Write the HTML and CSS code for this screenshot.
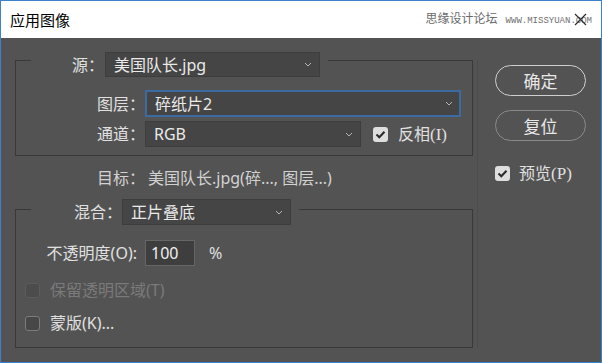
FILE: index.html
```html
<!DOCTYPE html>
<html lang="zh-CN">
<head>
  <meta charset="UTF-8">
  <title>应用图像</title>
  <link rel="stylesheet" href="styles.css">
</head>
<body>
  <div class="window">
    <div class="titlebar">
      <span class="title">应用图像</span>
      <span class="watermark">思缘设计论坛<span class="wm-url">WWW.MISSYUAN.COM</span></span>
      <svg class="close" width="13" height="13" viewBox="0 0 13 13"><path d="M1 1L12 12M12 1L1 12" stroke="#2b2b2b" stroke-width="1.2" fill="none"/></svg>
    </div>

    <div class="content">
      <div class="main">
        <div class="group group-source">
          <div class="group-head">
            <span class="head-label">源：</span>
            <div class="select select-source">美国队长.jpg<svg class="chev" width="8" height="5" viewBox="0 0 8 5"><path d="M1 1l3 3 3-3" fill="none" stroke="#b5b5b5"/></svg></div>
          </div>
          <div class="row row-layer">
            <span class="lbl">图层：</span>
            <div class="select select-layer">碎纸片2<svg class="chev" width="8" height="5" viewBox="0 0 8 5"><path d="M1 1l3 3 3-3" fill="none" stroke="#b5b5b5"/></svg></div>
          </div>
          <div class="row row-channel">
            <span class="lbl">通道：</span>
            <div class="select select-channel">RGB<svg class="chev" width="8" height="5" viewBox="0 0 8 5"><path d="M1 1l3 3 3-3" fill="none" stroke="#b5b5b5"/></svg></div>
            <span class="check on"><svg width="11" height="9" viewBox="0 0 11 9"><path d="M1.5 4.5l2.8 2.8 5.2-5.6" fill="none" stroke="#2a2a2a" stroke-width="2"/></svg></span>
            <span class="check-text">反相<span class="serif">(I)</span></span>
          </div>
        </div>

        <div class="target">
          <span class="lbl-target">目标：</span>
          <span class="target-value">美国队长.jpg(碎..., 图层...)</span>
        </div>

        <div class="group group-blend">
          <div class="group-head">
            <span class="head-label">混合：</span>
            <div class="select select-blend">正片叠底<svg class="chev" width="8" height="5" viewBox="0 0 8 5"><path d="M1 1l3 3 3-3" fill="none" stroke="#b5b5b5"/></svg></div>
          </div>
          <div class="row row-opacity">
            <span class="lbl-opacity">不透明度(O):</span>
            <div class="num-input">100</div>
            <span class="pct">%</span>
          </div>
          <div class="row row-check row-preserve">
            <span class="check disabled"></span>
            <span class="check-text muted">保留透明区域(T)</span>
          </div>
          <div class="row row-check row-mask">
            <span class="check off"></span>
            <span class="check-text">蒙版(K)...</span>
          </div>
        </div>
      </div>

      <div class="side">
        <button class="btn btn-ok">确定</button>
        <button class="btn btn-reset">复位</button>
        <div class="row row-preview">
          <span class="check on"><svg width="11" height="9" viewBox="0 0 11 9"><path d="M1.5 4.5l2.8 2.8 5.2-5.6" fill="none" stroke="#2a2a2a" stroke-width="2"/></svg></span>
          <span class="check-text">预览<span class="serif">(P)</span></span>
        </div>
      </div>
    </div>
  </div>
</body>
</html>
```

FILE: styles.css
```css
body {
  margin: 0;
  font-family: "Noto Sans", "Noto Sans CJK SC", sans-serif;
  font-size: 16px;
  color: #e0e0e0;
}
.window {
  width: 602px;
  height: 363px;
  box-sizing: border-box;
  border: 1px solid #3a82cc;
  background: #535353;
  display: flex;
  flex-direction: column;
}
.titlebar {
  position: relative;
  flex-shrink: 0;
  height: 37px;
  background: #fff;
  display: flex;
  align-items: center;
  padding: 0 9px 0 9px;
  line-height: 20px;
}
.title {
  color: #000;
  font-size: 15px;
}
.watermark {
  margin-left: auto;
  color: #6a6a6a;
  font-size: 12px;
}
.wm-url {
  font-family: "Liberation Mono", monospace;
  font-size: 9px;
  margin-left: 8px;
  color: #707070;
}
.close {
  position: absolute;
  right: 14px;
  top: 12px;
}

.content {
  flex: 1;
  display: flex;
}
.main {
  width: 476px;
  box-sizing: border-box;
  padding: 22px 0 0 14px;
  line-height: 20px;
}

/* group boxes: top border drawn by the head row so the label sits on it */
.group {
  width: 458px;
  box-sizing: border-box;
  border: 1px solid #393939;
  border-top: none;
  display: flex;
  flex-direction: column;
}
.group-head {
  display: flex;
  align-items: center;
  height: 25px;
  margin-top: -8px;
}
.group-head::before,
.group-head::after {
  content: "";
  align-self: flex-start;
  margin-top: 8px;
  border-top: 1px solid #393939;
}
.group-head::before {
  width: 15px;
}
.group-head::after {
  flex: 1;
  margin-left: 8px;
}
.group-source .head-label {
  margin-left: 41px;
  margin-right: 1px;
}
.group-source {
  padding-bottom: 8px;
}

.group-blend {
  margin-top: 21px;
  padding-bottom: 14px;
}
.group-blend .group-head {
  height: 26px;
  margin-top: -10px;
}
.group-blend .group-head::before,
.group-blend .group-head::after {
  margin-top: 10px;
}
.group-blend .head-label {
  margin-left: 43px;
}

.select {
  display: flex;
  align-items: center;
  box-sizing: border-box;
  height: 25px;
  padding: 0 7px 0 8px;
  background: #454545;
  border: 1px solid #3d3d3d;
  color: #eaeaea;
}
.chev {
  margin-left: auto;
}
.select-source {
  width: 215px;
}
.select-layer {
  width: 316px;
  height: 27px;
  border: 2px solid #3c6aa2;
  padding-left: 8px;
  padding-right: 6px;
}
.select-channel {
  width: 216px;
  height: 26px;
}
.select-blend {
  width: 169px;
  height: 26px;
}

.row {
  display: flex;
  align-items: center;
}
.lbl {
  width: 129px;
  text-align: right;
}
.row-layer {
  margin-top: 13px;
}
.row-channel {
  margin-top: 4px;
}
.row-channel .check {
  margin-left: 12px;
}

.check {
  display: flex;
  align-items: center;
  justify-content: center;
  width: 15px;
  height: 15px;
  box-sizing: border-box;
  border-radius: 3px;
  flex-shrink: 0;
}
.check.on {
  background: #dedede;
}
.check.off {
  background: #474747;
  border: 1px solid #7c7c7c;
}
.check.disabled {
  background: #4c4c4c;
  border: 1px solid #5c5c5c;
}
.check-text {
  margin-left: 10px;
}
.muted {
  color: #7a7a7a;
}
.serif {
  font-family: "Liberation Serif", serif;
  font-size: 17px;
}

.target {
  display: flex;
  margin-top: 12px;
  color: #d2d2d2;
}
.lbl-target {
  width: 130px;
  text-align: right;
}
.target-value {
  margin-left: 3px;
}

.row-opacity {
  margin-top: 15px;
}
.lbl-opacity {
  width: 121px;
  margin-right: 8px;
  text-align: right;
}
.num-input {
  width: 50px;
  height: 26px;
  box-sizing: border-box;
  padding-left: 5px;
  line-height: 24px;
  background: #3e3e3e;
  border: 1px solid #666;
  color: #f0f0f0;
}
.pct {
  margin-left: 14px;
}
.row-check {
  padding-left: 9px;
  height: 20px;
}
.row-preserve {
  margin-top: 14px;
}
.row-mask {
  margin-top: 13px;
}

.side {
  flex: 1;
  margin: 22px 0 14px 0;
  border-left: 1px solid #4c4c4c;
  padding-left: 17px;
  line-height: 20px;
}
.btn {
  display: block;
  width: 91px;
  height: 31px;
  border-radius: 16px;
  border: 1px solid #cfcfcf;
  background: transparent;
  color: #e8e8e8;
  font-family: "Noto Sans CJK SC", sans-serif;
  font-size: 17px;
  padding: 0;
}
.btn-ok {
  margin-top: 5px;
}
.btn-reset {
  margin-top: 14px;
  border-color: #8a8a8a;
}
.row-preview {
  margin-top: 22px;
}
.row-preview .check-text {
  margin-left: 9px;
}
```
